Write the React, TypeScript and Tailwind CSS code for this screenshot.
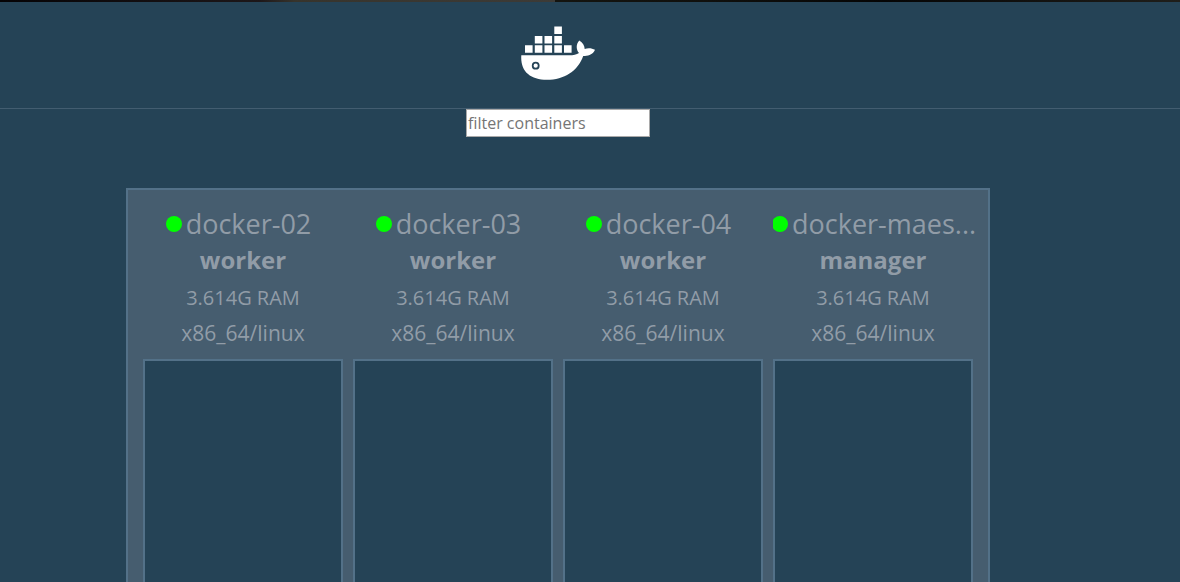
import React, { useState } from "react";

type SwarmNode = { name: string; role: string; memory: string; platform: string };

const nodes: SwarmNode[] = [
  { name: "docker-02", role: "worker", memory: "3.614G RAM", platform: "x86_64/linux" },
  { name: "docker-03", role: "worker", memory: "3.614G RAM", platform: "x86_64/linux" },
  { name: "docker-04", role: "worker", memory: "3.614G RAM", platform: "x86_64/linux" },
  { name: "docker-maes...", role: "manager", memory: "3.614G RAM", platform: "x86_64/linux" },
];

function DockerLogo() {
  return (
    <svg viewBox="0 0 74 54" className="h-[54px] w-[74px]" fill="#fff" role="img" aria-label="Docker">
      <path d="M33.3 .4h7.6V8h-7.6zM13.8 10h7.6v7.5h-7.6zM23.5 10h7.6v7.5h-7.6zM33.3 10h7.6v7.5h-7.6zM4 19.3h7.6v7.5H4zM13.8 19.3h7.6v7.5h-7.6zM23.5 19.3h7.6v7.5h-7.6zM33.3 19.3h7.6v7.5h-7.6zM43 19.3h7.6v7.5H43z" />
      <path
        fillRule="evenodd"
        d="M.3 29.3H48C52.500 29.300 55.500 28.500 58 27C54.800 23.500 55 18 58.300 14.600C61.800 17 63.500 19.500 63.700 22.900C67 21.700 71 22 74 23.800C72 28.300 67.500 30.500 62.200 29.900C57 45 43 53.700 26 53.700C9 53.700 -.8 45 .3 29.300ZM14.700 35.800a3.900 3.900 0 1 0 0 7.800a3.900 3.900 0 0 0 0-7.800Z"
      />
      <circle cx="14.700" cy="39.700" r="2.100" />
    </svg>
  );
}

function NodeColumn({ node }: { node: SwarmNode }) {
  return (
    <section className="flex min-w-0 flex-1 flex-col text-center text-[#919ca7]">
      <h2 className="flex items-center justify-center-safe gap-1 text-[27px] leading-[38px] [clip-path:inset(0_-8px_0_0)] after:-ml-1 after:w-2 after:shrink after:content-['']">
        <span className="-ml-px size-4 shrink-0 rounded-full bg-[#00ff00]" />
        <span className="shrink-0 whitespace-nowrap">{node.name}</span>
      </h2>
      <p className="text-[24px] leading-[34px] font-bold">{node.role}</p>
      <p className="mt-1 text-[20px] leading-[34px]">{node.memory}</p>
      <p className="text-[21px] leading-9">{node.platform}</p>
      <div className="mt-2 flex-1 border-2 border-b-0 border-[#537188] bg-[#254356]" />
    </section>
  );
}

export default function App() {
  const [filter, setFilter] = useState("");
  const shown = nodes.filter((node) => node.name.includes(filter));

  return (
    <div className="flex h-screen flex-col overflow-hidden bg-[#254356] font-['Open_Sans',sans-serif]">
      <div className="h-[2px] shrink-0 bg-[linear-gradient(to_right,#050305_0%,#1d1719_22%,#37342c_25%,#3d3b37_47%,#14140f_47%,#10100d_60%,#050505_75%,#1f1e1a_100%)]" />
      <header className="flex justify-center border-b border-[#435d70] pt-6 pr-16 pb-7">
        <DockerLogo />
      </header>
      <main className="flex flex-1 flex-col items-center pr-16">
        <input
          type="text"
          aria-label="Filter containers"
          placeholder="filter containers"
          value={filter}
          onChange={(event) => setFilter(event.target.value)}
          className="h-7 w-[184px] border border-[#a9a9a9] bg-white px-px text-[16px] text-black placeholder:text-[#757575]"
        />
        <div className="mt-[51px] flex w-full max-w-[864px] flex-1 gap-[10px] border-2 border-b-0 border-[#537188] bg-[#465d6f] px-[15px] pt-[15px]">
          {shown.map((node) => (
            <NodeColumn key={node.name} node={node} />
          ))}
        </div>
      </main>
    </div>
  );
}
